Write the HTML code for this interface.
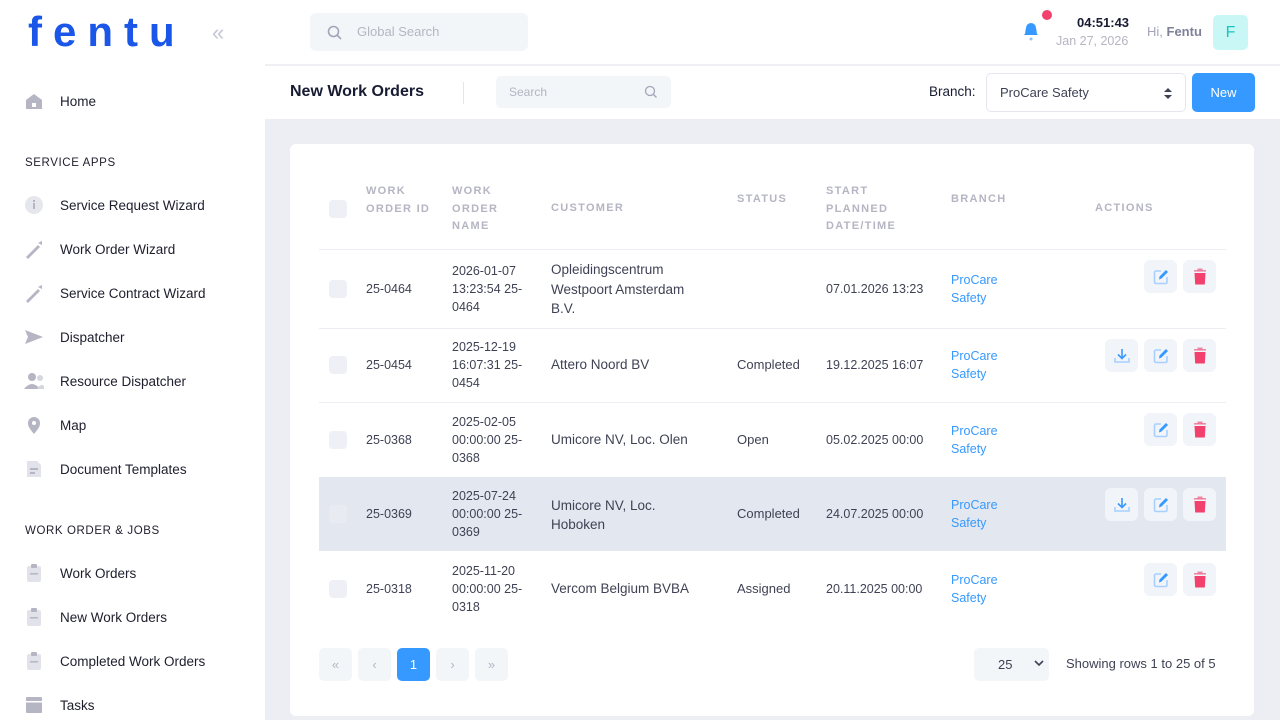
<!DOCTYPE html>
<html><head><meta charset="utf-8"><style>
*{box-sizing:border-box;margin:0;padding:0}
html{width:1280px;height:720px;overflow:hidden}
body{width:1280px;height:720px;overflow:hidden;font-family:"Liberation Sans",sans-serif;background:#eceef4;position:relative;color:#3f4254}
.abs{position:absolute}
.side{left:0;top:0;width:265px;height:720px;background:#fff}
.logo{left:28px;top:8px;font-size:42px;font-weight:bold;color:#1a56e8;letter-spacing:11px}
.nav{left:0;width:265px;height:44px;display:flex;align-items:center;font-size:13.5px;color:#1e1e2d}
.nav .ic{width:20px;height:20px;margin-left:24px;margin-right:16px;display:flex;align-items:center;justify-content:center}
.sec{left:25px;font-size:11.5px;letter-spacing:.6px;color:#1e1e2d;font-weight:500}
.top{left:265px;top:0;width:1015px;height:65px;background:#fff;border-bottom:1px solid #eef0f4}
.sub{left:265px;top:66px;width:1015px;height:53px;background:#fff}
.card{left:290px;top:144px;width:964px;height:572px;background:#fff;border-radius:6px}
.th{font-size:11px;letter-spacing:1.3px;color:#b5b5c3;font-weight:bold;line-height:17.5px}
.td{font-size:12.5px;color:#3f4254;line-height:18px}
.cb{width:18px;height:18px;border-radius:4px;background:#eef0f6}
.line{left:319px;width:907px;height:1px;background:#eceef3}
.link{color:#3699ff;font-size:12.5px;line-height:18px}
.btn{width:33px;height:33px;border-radius:6px;background:#f1f4f9;display:flex;align-items:center;justify-content:center}
.pg{width:33px;height:33px;border-radius:5px;background:#f3f6f9;color:#b5b5c3;display:flex;align-items:center;justify-content:center;font-size:13px;top:648px}
</style></head><body>
<div class="abs side">
<div class="abs logo">fentu</div>
<div class="abs" style="left:212px;top:20px;color:#c4c7d4;font-size:22px">«</div>
<div class="abs nav" style="top:79px"><span class="ic"><svg width="20" height="20"><path d="M2 9L10 3L18 9V18H2Z" fill="#b5b5c3"/><rect x="8" y="12" width="4" height="4" fill="#fff"/></svg></span>Home</div>
<div class="abs sec" style="top:157px">SERVICE APPS</div>
<div class="abs nav" style="top:183px"><span class="ic"><svg width="20" height="20"><circle cx="10" cy="10" r="9" fill="#e6e7ed"/><rect x="9" y="8" width="2" height="6" fill="#b5b5c3"/><rect x="9" y="5" width="2" height="2" fill="#b5b5c3"/></svg></span>Service Request Wizard</div>
<div class="abs nav" style="top:227px"><span class="ic"><svg width="20" height="20"><path d="M2 18L14 6L16 8L4 20Z M14 4L18 2L18 6Z" fill="#b5b5c3"/></svg></span>Work Order Wizard</div>
<div class="abs nav" style="top:271px"><span class="ic"><svg width="20" height="20"><path d="M2 18L14 6L16 8L4 20Z M14 4L18 2L18 6Z" fill="#b5b5c3"/></svg></span>Service Contract Wizard</div>
<div class="abs nav" style="top:315px"><span class="ic"><svg width="20" height="20"><path d="M1 3L19 10L1 17L4 10Z" fill="#b5b5c3"/></svg></span>Dispatcher</div>
<div class="abs nav" style="top:359px"><span class="ic"><svg width="22" height="20"><circle cx="8" cy="6" r="4" fill="#b5b5c3"/><path d="M0 18Q8 8 16 18Z" fill="#b5b5c3"/><circle cx="16" cy="7" r="3" fill="#d5d6de"/><path d="M13 18Q18 10 22 18Z" fill="#d5d6de"/></svg></span>Resource Dispatcher</div>
<div class="abs nav" style="top:403px"><span class="ic"><svg width="20" height="20"><path d="M10 19C4 12 4 10 4 8A6 6 0 0 1 16 8C16 10 16 12 10 19Z" fill="#b5b5c3"/><circle cx="10" cy="8" r="2" fill="#fff"/></svg></span>Map</div>
<div class="abs nav" style="top:447px"><span class="ic"><svg width="20" height="20"><path d="M3 2H13L17 6V18H3Z" fill="#e2e3ea"/><rect x="6" y="9" width="8" height="2" fill="#b5b5c3"/><rect x="6" y="13" width="5" height="2" fill="#b5b5c3"/></svg></span>Document Templates</div>
<div class="abs sec" style="top:525px">WORK ORDER &amp; JOBS</div>
<div class="abs nav" style="top:551px"><span class="ic"><svg width="20" height="20"><rect x="3" y="3" width="14" height="16" rx="2" fill="#e2e3ea"/><rect x="7" y="1" width="6" height="4" rx="1" fill="#b5b5c3"/><rect x="6" y="10" width="8" height="1.5" fill="#b5b5c3"/></svg></span>Work Orders</div>
<div class="abs nav" style="top:595px"><span class="ic"><svg width="20" height="20"><rect x="3" y="3" width="14" height="16" rx="2" fill="#e2e3ea"/><rect x="7" y="1" width="6" height="4" rx="1" fill="#b5b5c3"/><rect x="6" y="10" width="8" height="1.5" fill="#b5b5c3"/></svg></span>New Work Orders</div>
<div class="abs nav" style="top:639px"><span class="ic"><svg width="20" height="20"><rect x="3" y="3" width="14" height="16" rx="2" fill="#e2e3ea"/><rect x="7" y="1" width="6" height="4" rx="1" fill="#b5b5c3"/><rect x="6" y="10" width="8" height="1.5" fill="#b5b5c3"/></svg></span>Completed Work Orders</div>
<div class="abs nav" style="top:683px"><span class="ic"><svg width="20" height="20"><rect x="2" y="2" width="16" height="16" rx="1" fill="#b5b5c3"/><rect x="2" y="6" width="16" height="1.5" fill="#fff"/></svg></span>Tasks</div>
</div>

<div class="abs top">
<div class="abs" style="left:45px;top:13px;width:218px;height:38px;background:#f3f6f9;border-radius:6px"><svg class="abs" style="left:17px;top:12px" width="15" height="15"><circle cx="6.5" cy="6.5" r="5" stroke="#a1a5b7" stroke-width="1.6" fill="none"/><path d="M10 10L14 14" stroke="#a1a5b7" stroke-width="1.6"/></svg><span class="abs" style="left:47px;top:11px;font-size:13px;color:#b5b5c3">Global Search</span></div>
<svg class="abs" style="left:756px;top:20px" width="20" height="22"><path d="M3 15C5 13 4 11 5 8A5 5 0 0 1 15 8C16 11 15 13 17 15Z" fill="#3699ff"/><circle cx="10" cy="19" r="1.5" fill="#8fc3ff"/></svg>
<div class="abs" style="left:777px;top:10px;width:10px;height:10px;border-radius:50%;background:#f1416c"></div>
<div class="abs" style="left:812px;top:15px;font-size:13px;font-weight:bold;color:#181c32">04:51:43</div>
<div class="abs" style="left:791px;top:34px;font-size:12.5px;color:#b5b5c3">Jan 27, 2026</div>
<div class="abs" style="left:882px;top:24px;font-size:13px;color:#a1a5b7">Hi, <b style="color:#7e8299">Fentu</b></div>
<div class="abs" style="left:948px;top:15px;width:35px;height:35px;background:#c9f7f5;border-radius:5px;color:#1bc5bd;font-size:16px;display:flex;align-items:center;justify-content:center">F</div>
</div>

<div class="abs sub">
<div class="abs" style="left:25px;top:17px;font-size:16px;color:#181c32;font-weight:bold">New Work Orders</div>
<div class="abs" style="left:198px;top:16px;width:1px;height:22px;background:#e4e6ef"></div>
<div class="abs" style="left:231px;top:10px;width:175px;height:32px;background:#f3f6f9;border-radius:5px"><span class="abs" style="left:13px;top:9px;font-size:12px;color:#b5b5c3">Search</span><svg class="abs" style="left:148px;top:9px" width="14" height="14"><circle cx="6" cy="6" r="4.5" stroke="#a1a5b7" stroke-width="1.3" fill="none"/><path d="M9.5 9.5L12.5 12.5" stroke="#a1a5b7" stroke-width="1.3"/></svg></div>
<div class="abs" style="left:664px;top:18px;font-size:13.5px;color:#181c32">Branch:</div>
<div class="abs" style="left:721px;top:7px;width:200px;height:39px;border:1px solid #e4e6ef;border-radius:5px;background:#fff"><span class="abs" style="left:13px;top:11px;font-size:13px;color:#3f4254">ProCare Safety</span><svg class="abs" style="left:176px;top:13px" width="10" height="13"><path d="M1 5L5 1L9 5Z M1 8L5 12L9 8Z" fill="#3f4254"/></svg></div>
<div class="abs" style="left:927px;top:7px;width:63px;height:39px;background:#3699ff;border-radius:5px;color:#fff;font-size:13px;display:flex;align-items:center;justify-content:center">New</div>
</div>

<div class="abs card"></div>
<div class="abs cb" style="left:329px;top:200px"></div>
<div class="abs th" style="left:366px;top:183px">WORK<br>ORDER ID</div>
<div class="abs th" style="left:452px;top:183px">WORK<br>ORDER<br>NAME</div>
<div class="abs th" style="left:551px;top:200px">CUSTOMER</div>
<div class="abs th" style="left:737px;top:191px">STATUS</div>
<div class="abs th" style="left:826px;top:183px">START<br>PLANNED<br>DATE/TIME</div>
<div class="abs th" style="left:951px;top:191px">BRANCH</div>
<div class="abs th" style="left:1095px;top:200px">ACTIONS</div>
<div class="abs line" style="top:249px"></div>
<div class="abs line" style="top:328px"></div>
<div class="abs line" style="top:402px"></div>
<div class="abs" style="left:319px;top:477px;width:907px;height:74px;background:#e3e7f0"></div>

<div class="abs cb" style="left:329px;top:280px"></div>
<div class="abs td" style="left:366px;top:280px">25-0464</div>
<div class="abs td" style="left:452px;top:262px">2026-01-07<br>13:23:54 25-<br>0464</div>
<div class="abs td" style="left:551px;top:260px;font-size:13.5px;line-height:19.5px">Opleidingscentrum<br>Westpoort Amsterdam<br>B.V.</div>
<div class="abs td" style="left:826px;top:280px">07.01.2026 13:23</div>
<div class="abs link" style="left:951px;top:271px">ProCare<br>Safety</div>

<div class="abs cb" style="left:329px;top:356px"></div>
<div class="abs td" style="left:366px;top:356px">25-0454</div>
<div class="abs td" style="left:452px;top:338px">2025-12-19<br>16:07:31 25-<br>0454</div>
<div class="abs td" style="left:551px;top:356px;font-size:13.5px">Attero Noord BV</div>
<div class="abs td" style="left:737px;top:356px;font-size:13px">Completed</div>
<div class="abs td" style="left:826px;top:356px">19.12.2025 16:07</div>
<div class="abs link" style="left:951px;top:347px">ProCare<br>Safety</div>

<div class="abs cb" style="left:329px;top:431px"></div>
<div class="abs td" style="left:366px;top:431px">25-0368</div>
<div class="abs td" style="left:452px;top:413px">2025-02-05<br>00:00:00 25-<br>0368</div>
<div class="abs td" style="left:551px;top:431px;font-size:13.5px">Umicore NV, Loc. Olen</div>
<div class="abs td" style="left:737px;top:431px;font-size:13px">Open</div>
<div class="abs td" style="left:826px;top:431px">05.02.2025 00:00</div>
<div class="abs link" style="left:951px;top:422px">ProCare<br>Safety</div>

<div class="abs cb" style="left:329px;top:505px;background:#e8ebf2"></div>
<div class="abs td" style="left:366px;top:505px">25-0369</div>
<div class="abs td" style="left:452px;top:487px">2025-07-24<br>00:00:00 25-<br>0369</div>
<div class="abs td" style="left:551px;top:496px;font-size:13.5px;line-height:19px">Umicore NV, Loc.<br>Hoboken</div>
<div class="abs td" style="left:737px;top:505px;font-size:13px">Completed</div>
<div class="abs td" style="left:826px;top:505px">24.07.2025 00:00</div>
<div class="abs link" style="left:951px;top:496px">ProCare<br>Safety</div>

<div class="abs cb" style="left:329px;top:580px"></div>
<div class="abs td" style="left:366px;top:580px">25-0318</div>
<div class="abs td" style="left:452px;top:562px">2025-11-20<br>00:00:00 25-<br>0318</div>
<div class="abs td" style="left:551px;top:580px;font-size:13.5px">Vercom Belgium BVBA</div>
<div class="abs td" style="left:737px;top:580px;font-size:13px">Assigned</div>
<div class="abs td" style="left:826px;top:580px">20.11.2025 00:00</div>
<div class="abs link" style="left:951px;top:571px">ProCare<br>Safety</div>

<div id="acts"></div>
<script>
var E='<svg width="18" height="18"><path d="M9 3H4A1.5 1.5 0 0 0 2.5 4.5V14A1.5 1.5 0 0 0 4 15.5H13.5A1.5 1.5 0 0 0 15 14V9" stroke="#a8d0ff" stroke-width="1.6" fill="none"/><path d="M7 11.5L7.5 8.5L14 2L16 4L9.5 10.5Z" fill="#3699ff"/></svg>';
var D='<svg width="16" height="18"><rect x="2" y="2" width="12" height="1.6" fill="#f1416c" opacity=".6"/><rect x="5.5" y="0.5" width="5" height="2" fill="#f1416c" opacity=".6"/><path d="M2.5 5H13.5L12.8 16.5H3.2Z" fill="#f1416c"/></svg>';
var L='<svg width="18" height="18"><path d="M2 11V15H16V11" stroke="#a8d0ff" stroke-width="1.6" fill="none"/><path d="M9 2V11M5 7.5L9 11.5L13 7.5" stroke="#3699ff" stroke-width="1.6" fill="none"/></svg>';
var rows=[[260,0],[339,1],[413,0],[488,1],[563,0]],h='';
rows.forEach(function(r){h+='<div class="abs btn" style="left:1144px;top:'+r[0]+'px">'+E+'</div><div class="abs btn" style="left:1183px;top:'+r[0]+'px">'+D+'</div>';if(r[1])h+='<div class="abs btn" style="left:1105px;top:'+r[0]+'px">'+L+'</div>';});
document.getElementById('acts').innerHTML=h;
</script>

<div class="abs pg" style="left:319px">«</div>
<div class="abs pg" style="left:358px">‹</div>
<div class="abs pg" style="left:397px;background:#3699ff;color:#fff">1</div>
<div class="abs pg" style="left:436px">›</div>
<div class="abs pg" style="left:475px">»</div>
<div class="abs" style="left:974px;top:648px;width:75px;height:33px;background:#f3f6f9;border-radius:5px"><span class="abs" style="left:24px;top:9px;font-size:13px;color:#3f4254">25</span><svg class="abs" style="left:60px;top:12px" width="10" height="8"><path d="M1 1L5 5L9 1" stroke="#3f4254" stroke-width="1.6" fill="none"/></svg></div>
<div class="abs" style="left:1066px;top:656px;font-size:13px;color:#3f4254">Showing rows 1 to 25 of 5</div>
</body></html>
